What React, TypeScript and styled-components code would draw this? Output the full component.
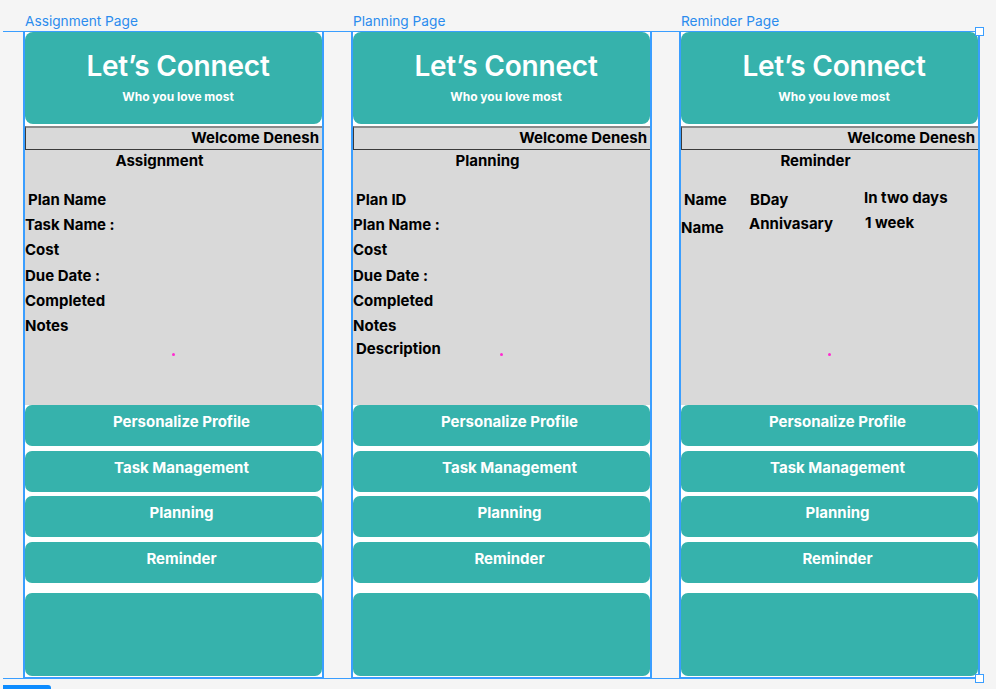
import styled, { createGlobalStyle } from "styled-components";

const GlobalStyle = createGlobalStyle`
	html, body {
		margin: 0;
		padding: 0;
		background: #f5f5f5;
	}
	body {
		font-family: Inter, "Noto Sans", "Liberation Sans", sans-serif;
	}
`;

const TEAL = "#36b2ac";
const BLUE = "#3a9eff";

type Field = { text: string; indent?: number; gap?: number };
type Reminder = { name: string; event: string; when: string; nudge: [number, number, number] };
type Page = {
	label: string;
	title: string;
	fields?: Field[];
	reminders?: Reminder[];
};

const pages: Page[] = [
	{
		label: "Assignment Page",
		title: "Assignment",
		fields: [
			{ text: "Plan Name", indent: 3 },
			{ text: "Task Name :" },
			{ text: "Cost" },
			{ text: "Due Date :" },
			{ text: "Completed" },
			{ text: "Notes" },
		],
	},
	{
		label: "Planning Page",
		title: "Planning",
		fields: [
			{ text: "Plan ID", indent: 3 },
			{ text: "Plan Name :" },
			{ text: "Cost" },
			{ text: "Due Date :" },
			{ text: "Completed" },
			{ text: "Notes" },
			{ text: "Description", indent: 3, gap: -2 },
		],
	},
	{
		label: "Reminder Page",
		title: "Reminder",
		reminders: [
			{ name: "Name", event: "BDay", when: "In two days", nudge: [0, 0, 2] },
			{ name: "Name", event: "Annivasary", when: "1 week", nudge: [-3, 1, 2] },
		],
	},
];

const menu = ["Personalize Profile", "Task Management", "Planning", "Reminder"];

const Canvas = styled.div`
	position: relative;
	width: 996px;
	height: 689px;
	overflow: hidden;
	display: flex;
	gap: 27px;
	padding: 13px 0 0 23px;
	box-sizing: border-box;
`;

const Column = styled.div`
	display: flex;
	flex-direction: column;
`;

const FrameLabel = styled.div`
	height: 18px;
	line-height: 16px;
	padding-left: 2px;
	font-size: 13.7px;
	color: #2b8cee;
`;

const Frame = styled.div`
	width: 301px;
	height: 647px;
	box-sizing: border-box;
	border: 1px solid ${BLUE};
	border-left-width: 2px;
	border-right-width: 2px;
	background: #ffffff;
	display: flex;
	flex-direction: column;
`;

const Header = styled.div`
	height: 92px;
	background: ${TEAL};
	border-radius: 8px;
	color: #ffffff;
	display: flex;
	flex-direction: column;
	align-items: center;
	padding-left: 9px;
	margin-bottom: 2px;
`;

const Title = styled.div`
	font-size: 28px;
	font-weight: 600;
	margin-top: 17px;
	line-height: 34px;
	letter-spacing: -0.2px;
`;

const Tagline = styled.div`
	font-size: 12px;
	font-weight: 700;
	margin-top: 6px;
`;

const WelcomeBar = styled.div`
	height: 24px;
	box-sizing: border-box;
	background: #d9d9d9;
	border-top: 2px solid #8a8a8a;
	border-left: 1px solid #3a3a3a;
	border-bottom: 1px solid #3a3a3a;
	display: flex;
	align-items: center;
	justify-content: flex-end;
	padding: 0 3px 3px 0;
	font-size: 15px;
	font-weight: 700;
	color: #000;
`;

const Panel = styled.div`
	position: relative;
	height: 255px;
	background: #d9d9d9;
	color: #000;
	font-size: 15px;
	font-weight: 700;
`;

const PanelTitle = styled.div`
	text-align: center;
	padding: 1px 28px 0 0;
	line-height: 20px;
`;

const FieldList = styled.div`
	margin-top: 16px;
	display: flex;
	flex-direction: column;
`;

const FieldRow = styled.div<{ $indent?: number; $gap?: number }>`
	line-height: 25.2px;
	padding-left: ${(p) => p.$indent ?? 0}px;
	margin-top: ${(p) => p.$gap ?? 0}px;
`;

const ReminderList = styled.div`
	margin-top: 17px;
	display: flex;
	flex-direction: column;
	gap: 1px;
`;

const ReminderRow = styled.div`
	display: grid;
	grid-template-columns: 67px 115px 1fr;
	line-height: 24px;
`;

const Cell = styled.span<{ $left?: number; $lift?: number }>`
	padding-left: ${(p) => p.$left ?? 0}px;
	margin-top: ${(p) => -(p.$lift ?? 0)}px;
`;

const Marker = styled.span`
	position: absolute;
	left: 147px;
	top: 203px;
	width: 3px;
	height: 3px;
	border-radius: 50%;
	background: #ff2bd0;
`;

const Menu = styled.div`
	display: flex;
	flex-direction: column;
	gap: 4.5px;
`;

const MenuButton = styled.div`
	height: 41px;
	background: ${TEAL};
	border-radius: 7px;
	color: #ffffff;
	font-size: 15px;
	font-weight: 700;
	text-align: center;
	padding-left: 16px;
	line-height: 33px;
`;

const Footer = styled.div`
	margin-top: 10px;
	height: 83px;
	background: ${TEAL};
	border-radius: 7px;
`;

const SelectionBox = styled.div`
	position: absolute;
	left: 3px;
	top: 31px;
	width: 977px;
	height: 646px;
	border-top: 1px solid ${BLUE};
	border-bottom: 1px solid ${BLUE};
	pointer-events: none;
`;

const Handle = styled.span<{ $bottom?: boolean }>`
	position: absolute;
	right: -4px;
	${(p) => (p.$bottom ? "bottom: -5px;" : "top: -5px;")}
	width: 7px;
	height: 7px;
	background: #ffffff;
	border: 1px solid ${BLUE};
`;

const BottomTab = styled.div`
	position: absolute;
	left: 3px;
	top: 685px;
	width: 48px;
	height: 6px;
	background: #0d8cff;
	border-radius: 0 3px 0 0;
`;

const PageFrame = ({ page }: { page: Page }) => (
	<Column>
		<FrameLabel>{page.label}</FrameLabel>
		<Frame>
			<Header>
				<Title>Let’s Connect</Title>
				<Tagline>Who you love most</Tagline>
			</Header>
			<WelcomeBar>Welcome Denesh</WelcomeBar>
			<Panel>
				<PanelTitle>{page.title}</PanelTitle>
				{page.fields && (
					<FieldList>
						{page.fields.map((f) => (
							<FieldRow key={f.text} $indent={f.indent} $gap={f.gap}>
								{f.text}
							</FieldRow>
						))}
					</FieldList>
				)}
				{page.reminders && (
					<ReminderList>
						{page.reminders.map((r, i) => (
							<ReminderRow key={r.event}>
								<Cell $left={i === 0 ? 3 : 0} $lift={r.nudge[0]}>
									{r.name}
								</Cell>
								<Cell $left={i === 0 ? 2 : 1} $lift={r.nudge[1]}>
									{r.event}
								</Cell>
								<Cell $left={i === 0 ? 1 : 2} $lift={r.nudge[2]}>
									{r.when}
								</Cell>
							</ReminderRow>
						))}
					</ReminderList>
				)}
				<Marker />
			</Panel>
			<Menu>
				{menu.map((m) => (
					<MenuButton key={m}>{m}</MenuButton>
				))}
			</Menu>
			<Footer />
		</Frame>
	</Column>
);

export default function App() {
	return (
		<>
			<GlobalStyle />
			<Canvas>
				{pages.map((p) => (
					<PageFrame key={p.label} page={p} />
				))}
				<SelectionBox>
					<Handle />
					<Handle $bottom />
				</SelectionBox>
				<BottomTab />
			</Canvas>
		</>
	);
}
